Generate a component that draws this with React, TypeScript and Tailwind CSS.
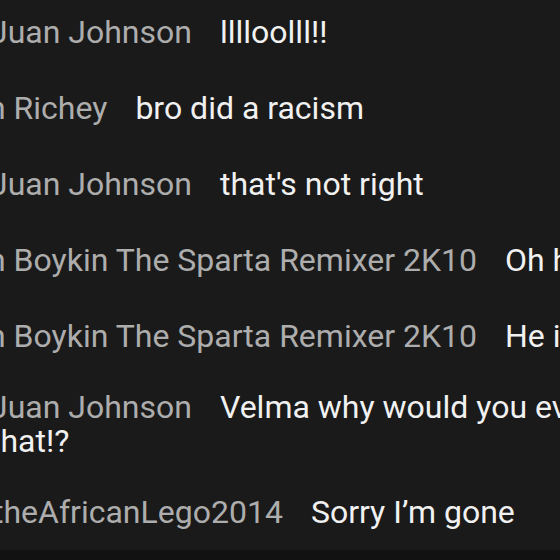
const messages = [
  { name: 'Juan Johnson', offset: 'ml-0', text: 'lllloolll!!' },
  { name: 'n Richey', offset: '-ml-[2px]', text: 'bro did a racism' },
  { name: 'Juan Johnson', offset: 'ml-0', text: "that's not right" },
  { name: 'n Boykin The Sparta Remixer 2K10', offset: '-ml-[2px]', text: 'Oh hell nah' },
  { name: 'n Boykin The Sparta Remixer 2K10', offset: '-ml-[2px]', text: 'He is done' },
  { name: 'Juan Johnson', offset: 'ml-0', text: 'Velma why would you ever do that!?' },
  { name: 'theAfricanLego2014', offset: 'ml-[3px]', text: 'Sorry I’m gone' },
];

export default function App() {
  return (
    <div
      className="w-[560px] h-[560px] overflow-hidden bg-[#1a1a1a] flex flex-col"
      style={{ fontFamily: 'Roboto, "Liberation Sans", sans-serif' }}
    >
      {/* Chat list */}
      <div className="-mt-[6px] -ml-[10px] w-[690px] shrink-0">
        {messages.map((m, i) => (
          <div key={i} className="min-h-[76px] flex items-center py-4">
            <p className="text-[32px] leading-[34px]">
              <span className={`${m.offset} mr-[28px] text-[#adadad]`}>{m.name}</span>
              <span className="text-[#f1f1f1]">{m.text}</span>
            </p>
          </div>
        ))}
      </div>

      {/* Input bar edge */}
      <div className="flex-1 bg-[#121212]" />
    </div>
  );
}
